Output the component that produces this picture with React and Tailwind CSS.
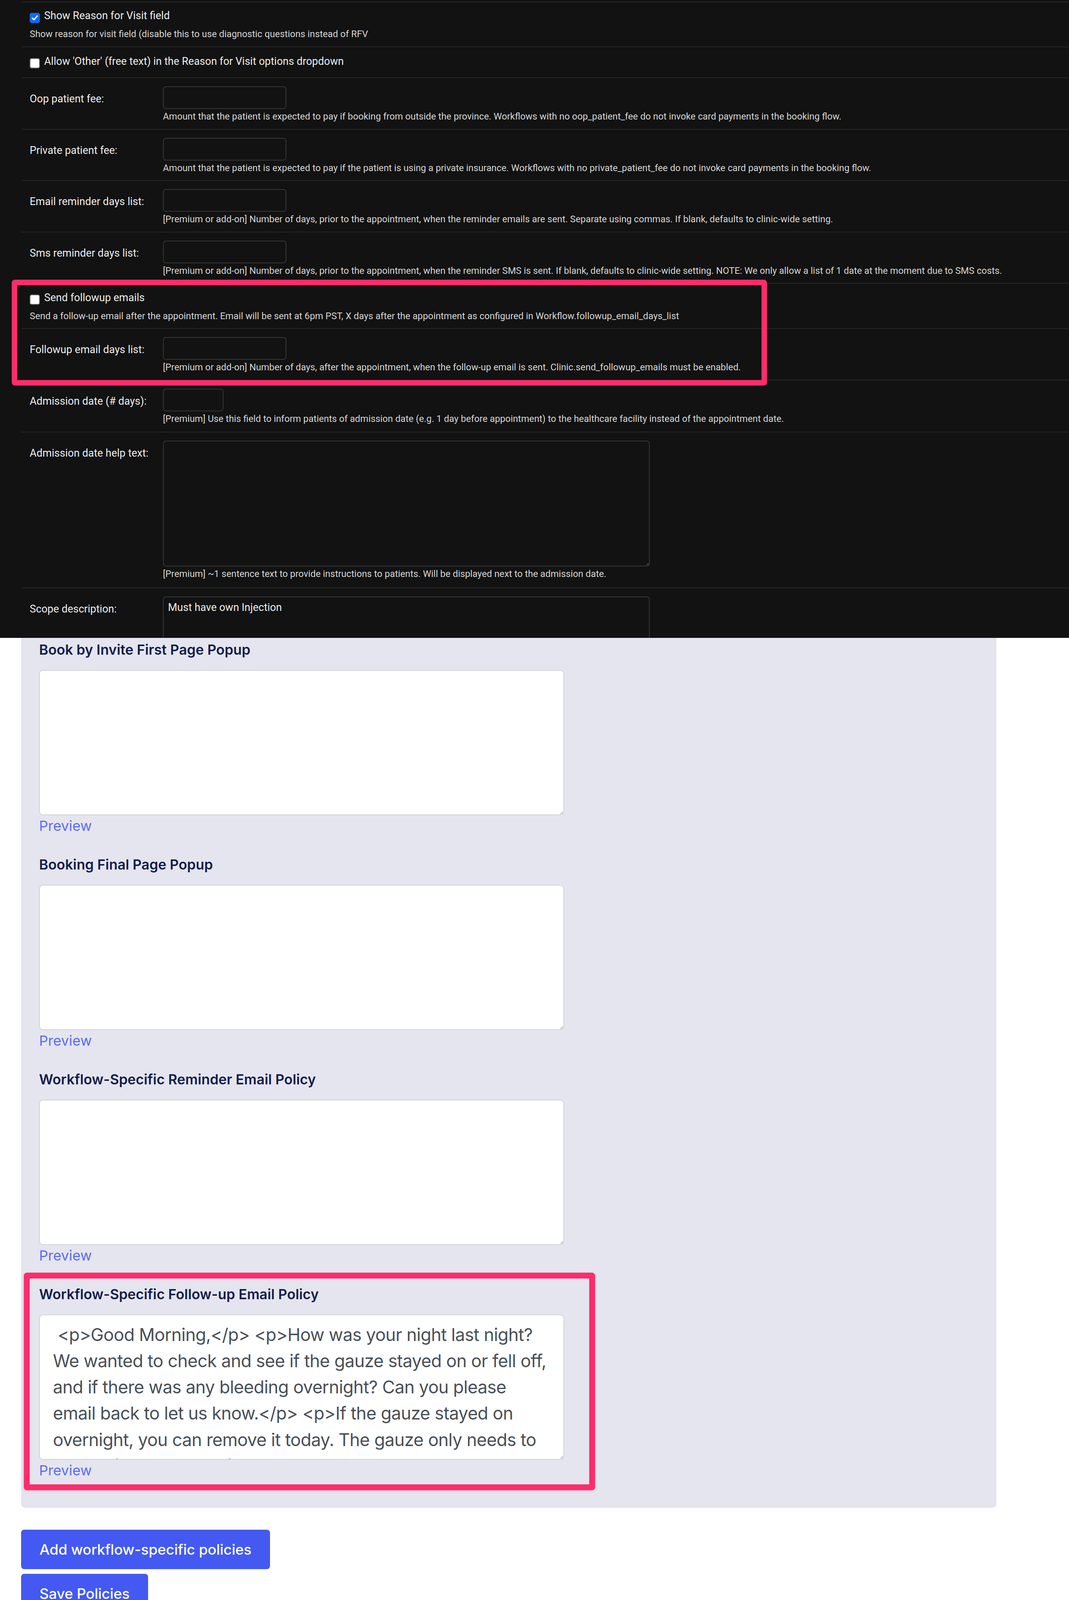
import React from "react";

const PINK = "border-[#fe2c6b]";

function Checkbox({ checked, className = "" }) {
  if (checked) {
    return (
      <span className={`shrink-0 w-[26px] h-[26px] rounded-[5px] bg-[#0b6bfb] flex items-center justify-center ${className}`}>
        <svg width="20" height="20" viewBox="0 0 24 24" fill="none">
          <path d="M4.5 12.5l5 5L19.5 6" stroke="white" strokeWidth="4" strokeLinecap="round" strokeLinejoin="round" />
        </svg>
      </span>
    );
  }
  return (
    <span className={`shrink-0 w-[26px] h-[26px] rounded-[5px] bg-white border-2 border-[#7b7b7b] ${className}`} />
  );
}

function CheckRow({ label, help, checked, pt = "pt-[22px]", pb = "pb-[16px]", boxMt = "mt-[6px]" }) {
  return (
    <div className={`border-b-2 border-[#272727] pl-[20px] ${pt} ${help ? pb : "pb-[27px]"}`}>
      <div className="flex items-start h-[28px]">
        <Checkbox checked={checked} className={boxMt} />
        <span className="ml-[11px] text-[27px] leading-[28px] text-[#eeeeee] whitespace-nowrap">{label}</span>
      </div>
      {help && (
        <p className="mt-[19px] text-[23.8px] leading-[29px] text-[#d6d6d6] whitespace-nowrap">{help}</p>
      )}
    </div>
  );
}

function InputRow({ label, help, w = "w-[316px]", pb = "pb-[17px]" }) {
  return (
    <div className={`border-b-2 border-[#272727] pl-[20px] pt-[21px] ${pb} flex`}>
      <label className="w-[341px] shrink-0 pt-[18px] text-[27px] leading-[28px] text-[#eeeeee] whitespace-nowrap">{label}</label>
      <div>
        <input type="text" className={`block ${w} h-[58px] bg-transparent border-2 border-[#353535] rounded-[8px] outline-none`} />
        <p className="mt-[5px] text-[23.8px] leading-[29px] text-[#d6d6d6] whitespace-nowrap">{help}</p>
      </div>
    </div>
  );
}

function PolicyBlock({ title, value, mt = "" }) {
  return (
    <div className={mt}>
      <h3 className="text-[35.5px] leading-[46px] font-semibold text-[#111d4b] whitespace-nowrap" style={{ fontFamily: "Inter, sans-serif" }}>
        {title}
      </h3>
      <textarea
        readOnly
        defaultValue={value}
        className="block mt-[28px] w-[1344px] h-[372px] bg-white border-2 border-[#ced4da] rounded-[10px] px-[33.6px] py-[16.8px] text-[44.8px] leading-[67.2px] tracking-[-0.7px] text-[#495057] overflow-hidden outline-none"
        style={{ fontFamily: "Inter, sans-serif" }}
      />
      <a className="block mt-[6px] text-[36px] leading-[43px] text-[#5a6cf5]" style={{ fontFamily: "Inter, sans-serif" }}>
        Preview
      </a>
    </div>
  );
}

const followText =
  " <p>Good Morning,</p> <p>How was your night last night? We wanted to check and see if the gauze stayed on or fell off, and if there was any bleeding overnight? Can you please email back to let us know.</p> <p>If the gauze stayed on overnight, you can remove it today. The gauze only needs to remain for 24 hours after the extraction, and it can be thrown away.</p>";

export default function App() {
  return (
    <div className="w-[2736px] bg-white">
      {/* Dark admin section */}
      <div className="relative h-[1633px] overflow-hidden bg-[#121212]" style={{ fontFamily: "Roboto, 'Noto Sans', sans-serif" }}>
        <div className="h-[4px]" />
        <div className="ml-[56px] border-t-2 border-[#272727]">
          <CheckRow
            checked
            label="Show Reason for Visit field"
            help="Show reason for visit field (disable this to use diagnostic questions instead of RFV"
            pt="pt-[20px]"
            pb="pb-[17px]"
            boxMt="mt-[7px]"
          />
          <CheckRow label="Allow 'Other' (free text) in the Reason for Visit options dropdown" />
          <InputRow
            label="Oop patient fee:"
            help="Amount that the patient is expected to pay if booking from outside the province. Workflows with no oop_patient_fee do not invoke card payments in the booking flow."
          />
          <InputRow
            label="Private patient fee:"
            pb="pb-[16px]"
            help="Amount that the patient is expected to pay if the patient is using a private insurance. Workflows with no private_patient_fee do not invoke card payments in the booking flow."
          />
          <InputRow
            label="Email reminder days list:"
            help="[Premium or add-on] Number of days, prior to the appointment, when the reminder emails are sent. Separate using commas. If blank, defaults to clinic-wide setting."
          />
          <InputRow
            label="Sms reminder days list:"
            pb="pb-[16px]"
            help="[Premium or add-on] Number of days, prior to the appointment, when the reminder SMS is sent. If blank, defaults to clinic-wide setting. NOTE: We only allow a list of 1 date at the moment due to SMS costs."
          />
          <CheckRow
            label="Send followup emails"
            help="Send a follow-up email after the appointment. Email will be sent at 6pm PST, X days after the appointment as configured in Workflow.followup_email_days_list"
          />
          <InputRow
            label="Followup email days list:"
            help="[Premium or add-on] Number of days, after the appointment, when the follow-up email is sent. Clinic.send_followup_emails must be enabled."
          />
          <InputRow
            label="Admission date (# days):"
            w="w-[155px]"
            pb="pb-[18px]"
            help="[Premium] Use this field to inform patients of admission date (e.g. 1 day before appointment) to the healthcare facility instead of the appointment date."
          />
          <div className="border-b-2 border-[#272727] pl-[20px] pt-[21px] pb-[20px] flex">
            <label className="w-[341px] shrink-0 pt-[18px] text-[27px] leading-[28px] text-[#eeeeee] whitespace-nowrap">Admission date help text:</label>
            <div>
              <textarea readOnly className="block w-[1246px] h-[322px] bg-transparent border-2 border-[#353535] rounded-[8px] outline-none" />
              <p className="mt-[5px] text-[23.8px] leading-[29px] text-[#d6d6d6] whitespace-nowrap">
                [Premium] ~1 sentence text to provide instructions to patients. Will be displayed next to the admission date.
              </p>
            </div>
          </div>
          <div className="pl-[20px] pt-[21px] flex">
            <label className="w-[341px] shrink-0 pt-[18px] text-[27px] leading-[28px] text-[#eeeeee] whitespace-nowrap">Scope description:</label>
            <textarea
              readOnly
              defaultValue="Must have own Injection"
              className="block w-[1246px] h-[240px] bg-transparent border-2 border-[#353535] rounded-[8px] px-[11px] py-[10px] text-[27px] leading-[32px] text-[#eeeeee] outline-none overflow-hidden"
            />
          </div>
        </div>
        {/* annotation box */}
        <div className={`absolute left-[30px] top-[716px] w-[1933px] h-[271px] border-[14px] ${PINK} rounded-[8px] pointer-events-none`} />
      </div>

      {/* Light policies section */}
      <div className="relative bg-white">
        <div className="ml-[54px] w-[2496px] bg-[#e5e5ef] rounded-b-[10px] pl-[46px] pt-[8px] pb-[74px]">
          <PolicyBlock title="Book by Invite First Page Popup" value="" />
          <PolicyBlock title="Booking Final Page Popup" value="" mt="mt-[55px]" />
          <PolicyBlock title="Workflow-Specific Reminder Email Policy" value="" mt="mt-[55px]" />
          <PolicyBlock title="Workflow-Specific Follow-up Email Policy" value={followText} mt="mt-[55px]" />
        </div>
        <div className="ml-[54px] mt-[56px] flex flex-col items-start gap-[12px]" style={{ fontFamily: "Inter, sans-serif" }}>
          <button className="h-[101px] px-[47px] rounded-[8px] bg-[#4359f1] text-white text-[37px] tracking-[-0.2px] font-medium whitespace-nowrap">
            Add workflow-specific policies
          </button>
          <button className="h-[101px] px-[47px] rounded-[8px] bg-[#4359f1] text-white text-[37px] tracking-[-0.2px] font-medium whitespace-nowrap">
            Save Policies
          </button>
        </div>
        <div className="h-[82px]" />
        <div className={`absolute left-[61px] top-[1625px] w-[1462px] h-[557px] border-[15px] ${PINK} rounded-[8px] shadow-[0_2px_6px_rgba(0,0,0,0.15)] pointer-events-none`} />
      </div>
    </div>
  );
}
